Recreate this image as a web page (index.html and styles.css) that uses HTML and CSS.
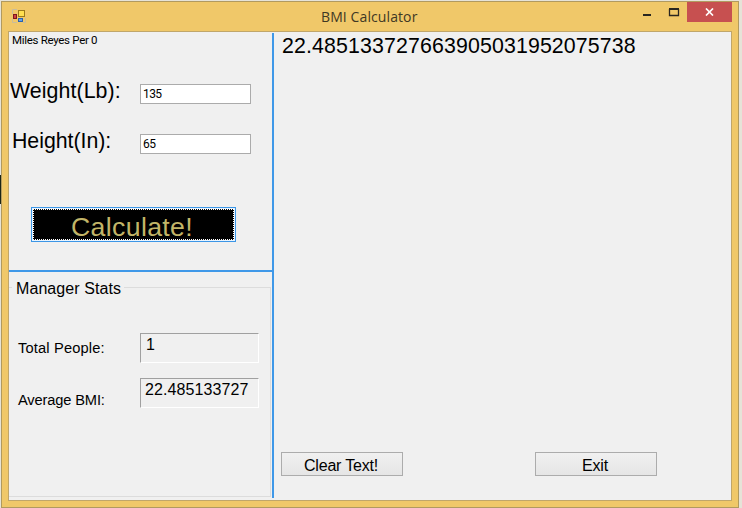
FILE: index.html
```html
<!DOCTYPE html>
<html lang="en">
<head>
<meta charset="utf-8">
<title>BMI Calculator</title>
<link rel="stylesheet" href="styles.css">
</head>
<body>
<div class="window">
  <header class="titlebar">
    <svg class="app-icon" width="14" height="14" viewBox="0 0 14 14">
      <path d="M.5 5V.5H5M.5 10v3.500H5M11 13.500h2.500V9" fill="none" stroke="#c9bd9c"/>
      <rect x="6.500" y="1.500" width="6" height="6" fill="#ffdf50" stroke="#9c7a1c"/>
      <rect x="1.500" y="5.500" width="3" height="4" fill="#d04040" stroke="#7c1820"/>
      <rect x="6.500" y="9.500" width="4" height="3" fill="#62a0ec" stroke="#2c62ac"/>
    </svg>
    <h1 class="title">BMI Calculator</h1>
    <svg class="controls" width="46" height="20" viewBox="0 0 46 20">
      <path d="M3 13h8" stroke="#292620" stroke-width="2"/>
      <path d="M29.500 7v6.500h9V7" fill="none" stroke="#292620" stroke-width="1.300"/>
      <path d="M29 7h10" stroke="#292620" stroke-width="2"/>
    </svg>
    <div class="close"><svg width="9" height="8" viewBox="0 0 9 8"><path d="M1 .5l7 7M8 .5l-7 7" stroke="#fff" stroke-width="1.700"/></svg></div>
  </header>
  <main class="client">
    <div class="left">
      <section class="inputs">
        <p class="author">Miles Reyes Per 0</p>
        <div class="field weight"><label>Weight(Lb):</label><div class="textbox">135</div></div>
        <div class="field height"><label>Height(In):</label><div class="textbox">65</div></div>
        <div class="calculate"><span>Calculate!</span></div>
      </section>
      <section class="stats">
        <div class="legend"><i class="stub"></i><h2>Manager Stats</h2><i class="rule"></i></div>
        <div class="group">
          <div class="stat people"><label>Total People:</label><div class="output">1</div></div>
          <div class="stat average"><label>Average BMI:</label><div class="output">22.485133727</div></div>
        </div>
      </section>
    </div>
    <div class="divider"></div>
    <section class="right">
      <div class="result">22.485133727663905031952075738</div>
      <div class="actions"><div class="button clear">Clear Text!</div><div class="button exit">Exit</div></div>
    </section>
  </main>
</div>
</body>
</html>
```
FILE: styles.css
```css
* { box-sizing: border-box; }
body { margin: 0; width: 742px; height: 508px; padding: 1px 0 0 1px; overflow: hidden; background: linear-gradient(#1c2415, #1c2415) 0 175px / 1px 29px no-repeat #e6e3d8; font-family: "Liberation Sans", Arial, sans-serif; color: #000; }
h1, h2, p { margin: 0; font-weight: normal; }
.window { width: 738px; height: 507px; border: 1px solid #b19a5f; background: #f0c869; }
.titlebar { display: flex; height: 29px; padding-left: 10px; }
.app-icon { flex: none; margin-top: 7px; }
.title { flex: none; width: 310px; margin-left: 295px; font: 14px/29px "Open Sans", sans-serif; letter-spacing: .1px; color: #3f3824; white-space: nowrap; }
.controls { margin-left: 9px; flex: none; }
.close { flex: none; width: 45px; height: 20px; margin-left: 1px; background: #c75050; display: flex; align-items: center; justify-content: center; }
.client { display: flex; width: 724px; height: 470px; margin-left: 6px; border: 1px solid #c0a66a; background: #f0f0f0; }
.left { width: 263px; }
.inputs { height: 240px; padding-top: 1px; border-bottom: 2px solid #3f98e8; }
.author { height: 14px; padding-left: 3px; font-family: Roboto, sans-serif; font-size: 11.500px; line-height: 14px; letter-spacing: -.3px; }
.field { display: flex; height: 20px; font-size: 21.33px; line-height: 20px; }
.field label { width: 131px; padding-left: 1px; margin-top: -3px; }
.weight { margin-top: 37px; }
.weight label { letter-spacing: .08px; }
.height { margin-top: 30px; }
.height label { padding-left: 3px; letter-spacing: -.03px; }
.textbox { width: 111px; border: 1px solid #ababab; background: #fff; padding-left: 2px; font-family: Roboto, sans-serif; font-size: 12px; line-height: 19px; letter-spacing: -.6px; }
.calculate { width: 205px; height: 35px; margin: 53px 0 0 22px; padding: 1px; border: 1px solid #3c96e6; background: #e8f4ff; }
.calculate span { display: block; height: 31px; border: 1px dotted #fff; background: #000; color: #c2b568; font-size: 26.67px; line-height: 35px; padding-left: 37px; letter-spacing: .35px; }
.stats { height: 225px; width: 262px; padding-top: 7px; }
.legend { display: flex; height: 18px; }
.legend h2 { width: 112px; padding-left: 4px; font-size: 16px; line-height: 20px; letter-spacing: .08px; }
.stub { width: 3px; height: 1px; margin-top: 8px; background: #dcdcdc; }
.rule { flex: 1; margin-top: 8px; border-top: 1px solid #dcdcdc; border-right: 1px solid #dcdcdc; }
.group { height: 200px; border: solid #dcdcdc; border-width: 0 1px 1px 0; padding-top: 36px; }
.stat { display: flex; height: 30px; }
.stat label { width: 131px; padding-left: 9px; font-size: 14.67px; line-height: 30px; letter-spacing: .16px; }
.average { margin-top: 15px; }
.average label { padding-top: 7px; letter-spacing: -.15px; }
.output { width: 119px; border: 1px solid; border-color: #a0a0a0 #fff #fff #a0a0a0; padding-left: 5px; font-size: 16px; line-height: 22px; }
.average .output { padding-left: 4px; letter-spacing: .1px; }
.divider { width: 2px; height: 465px; margin-top: 1px; background: #3f98e8; }
.right { flex: 1; padding-left: 7px; display: flex; flex-direction: column; justify-content: space-between; }
.result { padding: 2px 0 0 1px; font-size: 21.33px; line-height: 24px; letter-spacing: .13px; }
.actions { display: flex; gap: 132px; margin-bottom: 24px; }
.button { width: 122px; height: 24px; border: 1px solid #acacac; background: linear-gradient(#f0f0f0, #e5e5e5); text-align: center; font-size: 16px; line-height: 25px; letter-spacing: -.2px; padding-right: 2px; }
```
